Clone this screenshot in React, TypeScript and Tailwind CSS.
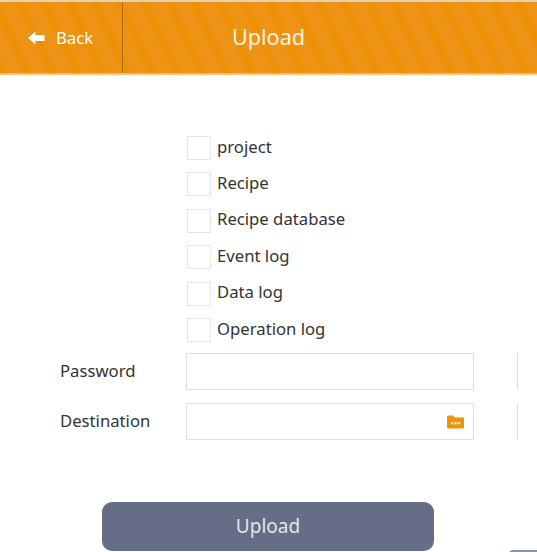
const options = ['project', 'Recipe', 'Recipe database', 'Event log', 'Data log', 'Operation log'];

function FolderIcon() {
  return (
    <svg width="17" height="14" viewBox="0 0 17 14">
      <path d="M0 1.5 Q0 0.5 1 0.5 H6 L7.5 2.5 H16 Q17 2.5 17 3.5 V12.5 Q17 13.5 16 13.5 H1 Q0 13.5 0 12.5 Z" fill="#ee9408" />
      <rect x="4" y="7" width="2.4" height="2.4" fill="#fbe3bb" />
      <rect x="7.4" y="7" width="2.4" height="2.4" fill="#fbe3bb" />
      <rect x="10.8" y="7" width="2.4" height="2.4" fill="#fbe3bb" />
    </svg>
  );
}

function Field({ label, children }: { label: string; children?: React.ReactNode }) {
  return (
    <div className="flex items-center h-[37px]">
      <label className="w-[186px] pl-[60px] text-[16.7px] text-[#333333] -mt-[3px]">{label}</label>
      <div className="w-[288px] h-[37px] border border-[#e0e0e0] bg-white flex items-center justify-end pr-[9px]">
        {children}
      </div>
      <div className="ml-[43px] w-[1px] h-[37px] bg-[#dddddd]" />
    </div>
  );
}

export default function App() {
  return (
    <div className="w-[537px] h-[552px] bg-white overflow-hidden font-['Noto_Sans',sans-serif]">
      <header className="h-[75px] flex border-t-2 border-b-2 border-t-[#e3d3b5] border-b-[#f8c47c] bg-[repeating-linear-gradient(65deg,#ee9005_0px,#ee9005_5px,#ee9315_8px,#ee9315_20px,#ee9005_22.6px)]">
        <button className="w-[123px] h-full border-r border-[#a8701c] flex items-center pl-[28px] text-white text-[16.7px]">
          <svg width="17" height="14" viewBox="0 0 17 14" className="mr-[11px]">
            <path d="M0 7 L7.5 0.5 V4 H16.5 V10 H7.5 V13.5 Z" fill="#ffffff" />
          </svg>
          Back
        </button>
        <h1 className="w-[291px] text-center text-[21.6px] font-normal leading-[69px] text-[#fdf3e2]">Upload</h1>
      </header>

      <div className="mt-[61px] pl-[187px] flex flex-col gap-[12.4px]">
        {options.map((name) => (
          <label key={name} className="flex items-center h-[24px] text-[16.7px] text-[#333333]">
            <span className="w-[24px] h-[24px] border border-[#e6e6e6] bg-white mr-[6px]" />
            <span className="-mt-[3.6px]">{name}</span>
          </label>
        ))}
      </div>

      <div className="mt-[11.5px] flex flex-col gap-[13px]">
        <Field label="Password" />
        <Field label="Destination">
          <FolderIcon />
        </Field>
      </div>

      <div className="mt-[62px] flex relative">
        <button className="ml-[102px] w-[332px] h-[49px] pb-[2px] rounded-[10px] bg-[#666d87] text-[#e4e6ec] text-[19px]">
          Upload
        </button>
        <div className="absolute left-[509px] top-[48px] w-[40px] h-[4px] rounded-t-[4px] bg-[#8b90a4]" />
      </div>
    </div>
  );
}
